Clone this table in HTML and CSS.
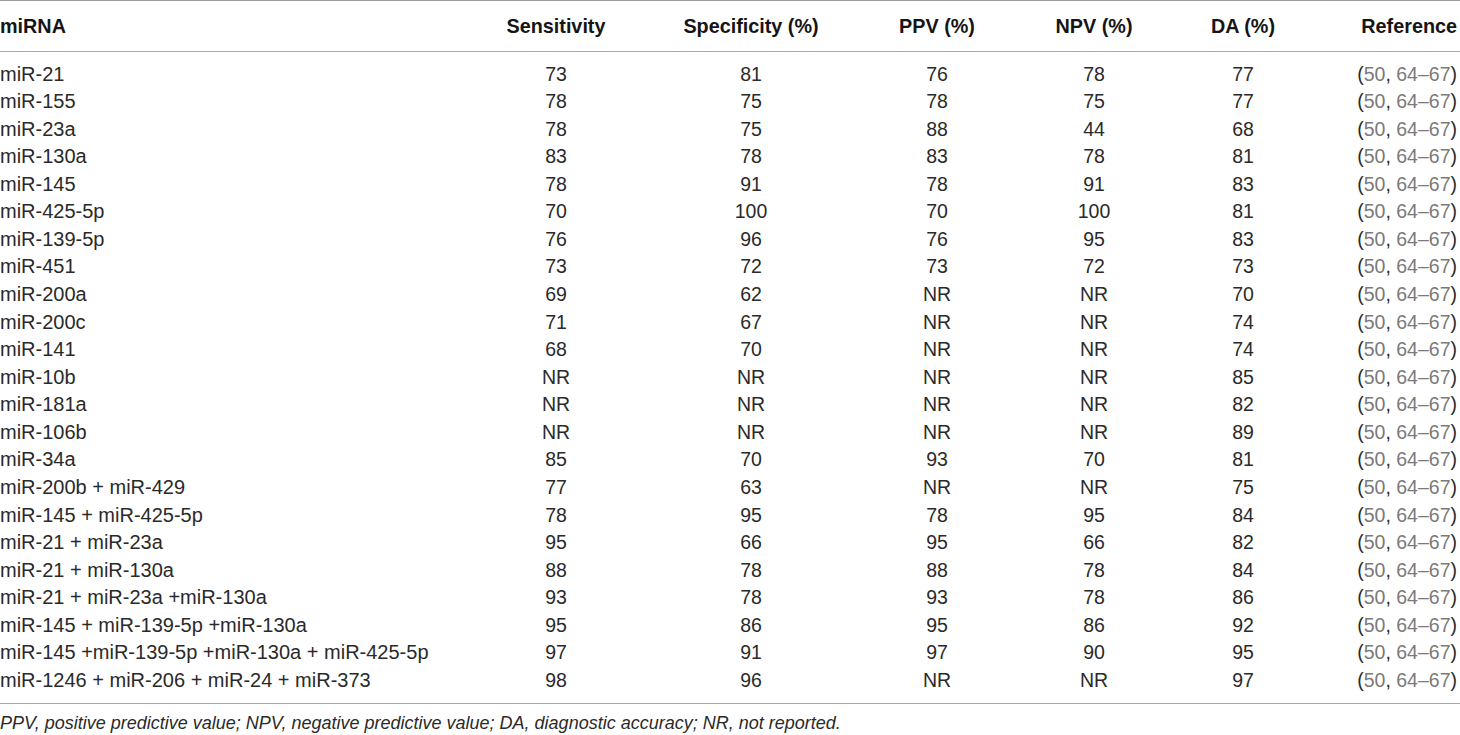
FILE: index.html
```html
<!DOCTYPE html>
<html>
<head>
<meta charset="utf-8">
<link rel="stylesheet" href="styles.css">
</head>
<body>
<div class="table">
  <div class="row head">
    <div class="c first">miRNA</div><div class="c">Sensitivity</div><div class="c">Specificity (%)</div><div class="c">PPV (%)</div><div class="c">NPV (%)</div><div class="c">DA (%)</div><div class="c last">Reference</div>
  </div>
  <div class="body" id="body"></div>
</div>
<p class="note">PPV, positive predictive value; NPV, negative predictive value; DA, diagnostic accuracy; NR, not reported.</p>
<script src="app.js"></script>
</body>
</html>
```
FILE: app.js
```js
const rows = [
["miR-21","73","81","76","78","77"],
["miR-155","78","75","78","75","77"],
["miR-23a","78","75","88","44","68"],
["miR-130a","83","78","83","78","81"],
["miR-145","78","91","78","91","83"],
["miR-425-5p","70","100","70","100","81"],
["miR-139-5p","76","96","76","95","83"],
["miR-451","73","72","73","72","73"],
["miR-200a","69","62","NR","NR","70"],
["miR-200c","71","67","NR","NR","74"],
["miR-141","68","70","NR","NR","74"],
["miR-10b","NR","NR","NR","NR","85"],
["miR-181a","NR","NR","NR","NR","82"],
["miR-106b","NR","NR","NR","NR","89"],
["miR-34a","85","70","93","70","81"],
["miR-200b + miR-429","77","63","NR","NR","75"],
["miR-145 + miR-425-5p","78","95","78","95","84"],
["miR-21 + miR-23a","95","66","95","66","82"],
["miR-21 + miR-130a","88","78","88","78","84"],
["miR-21 + miR-23a +miR-130a","93","78","93","78","86"],
["miR-145 + miR-139-5p +miR-130a","95","86","95","86","92"],
["miR-145 +miR-139-5p +miR-130a + miR-425-5p","97","91","97","90","95"],
["miR-1246 + miR-206 + miR-24 + miR-373","98","96","NR","NR","97"]
];
const body = document.getElementById("body");
for (const r of rows) {
  const row = document.createElement("div");
  row.className = "row";
  r.forEach((v, i) => {
    const c = document.createElement("div");
    c.className = i === 0 ? "c first" : "c";
    c.textContent = v;
    row.appendChild(c);
  });
  const ref = document.createElement("div");
  ref.className = "c last";
  ref.innerHTML = '(<a>50</a>, <a>64–67</a>)';
  row.appendChild(ref);
  body.appendChild(row);
}
```
FILE: styles.css
```css
html, body {
  margin: 0;
  padding: 0;
  background: #fff;
}
body {
  width: 1460px;
  font-family: "Liberation Sans", Arial, sans-serif;
  color: #2a2a2a;
}
.table {
  border-top: 1px solid #9a9a9a;
  border-bottom: 1.5px solid #a8a8a8;
}
.row {
  display: grid;
  grid-template-columns: 470px 172px 218px 154px 160px 138px 145px;
  padding-right: 3px;
}
.head {
  height: 50px;
  align-items: center;
  font-weight: bold;
  font-size: 19.8px;
  color: #151515;
  border-bottom: 1.5px solid #a8a8a8;
}
.body {
  padding: 8.5px 0 9px;
}
.body .row {
  font-size: 19.5px;
  line-height: 27.57px;
  height: 27.57px;
}
.body .c.first {
  font-size: 20px;
}
.c {
  text-align: center;
  white-space: nowrap;
}
.c.first {
  text-align: left;
}
.c.last {
  text-align: right;
}
.c.last a {
  color: #7a7a7a;
}
.note {
  margin: 9px 0 0;
  font-style: italic;
  font-size: 18px;
  color: #2a2a2a;
}
```
